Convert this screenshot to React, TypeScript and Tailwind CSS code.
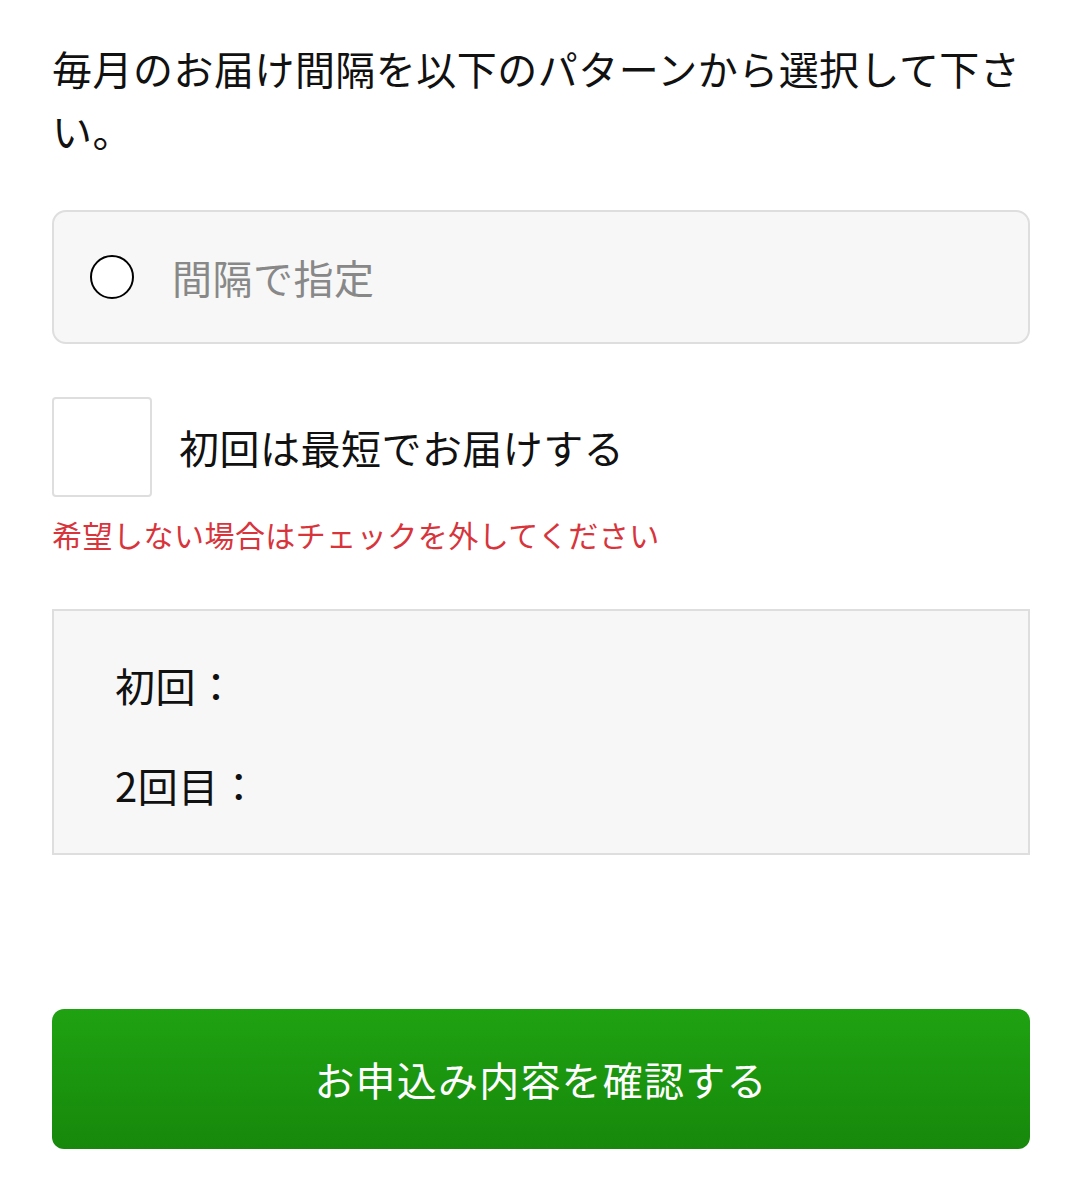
import { useState } from "react";

const App = () => {
  const [interval, setInterval] = useState(false);
  const [fastest, setFastest] = useState(false);

  return (
    <div
      className="min-h-[1194px] bg-white px-[52px] pt-[37px] tracking-[0.03em] text-[#111]"
      style={{ fontFamily: '"Noto Sans CJK JP", "Noto Sans", sans-serif' }}
    >
      <p className="text-[40px] leading-[62px]">
        毎月のお届け間隔を以下のパターンから選択して下さい。
      </p>

      <label
        className="mt-[49px] flex h-[134px] w-[978px] cursor-pointer items-center rounded-[14px] border-2 border-[#dedede] bg-[#f7f7f7] pl-[36px]"
        onClick={() => setInterval(!interval)}
      >
        <span className="flex h-[44px] w-[44px] items-center justify-center rounded-full border-2 border-black bg-white">
          {interval && <span className="h-[22px] w-[22px] rounded-full bg-black" />}
        </span>
        <span className="ml-[38px] text-[40px] leading-none text-[#888]">
          間隔で指定
        </span>
      </label>

      <label
        className="mt-[53px] flex cursor-pointer items-center"
        onClick={() => setFastest(!fastest)}
      >
        <span className="flex h-[100px] w-[100px] items-center justify-center rounded-[4px] border-2 border-[#dedede] bg-white">
          {fastest && (
            <svg width="56" height="56" viewBox="0 0 24 24" fill="none" stroke="#1b9a10" strokeWidth="3">
              <path d="M4 12l5 5L20 6" />
            </svg>
          )}
        </span>
        <span className="ml-[27px] text-[40px] leading-none">初回は最短でお届けする</span>
      </label>

      <p className="mt-[15px] text-[30px] leading-[45px] text-[#d8343c]">
        希望しない場合はチェックを外してください
      </p>

      <div className="mt-[52px] flex w-[978px] flex-col gap-[40px] border-2 border-[#dedede] bg-[#f7f7f7] pb-[38px] pl-[61px] pt-[44px] text-[40px] leading-[60px]">
        <div>初回：</div>
        <div>2回目：</div>
      </div>

      <button className="mt-[154px] flex h-[140px] w-[978px] items-center justify-center rounded-[12px] bg-gradient-to-b from-[#1fa212] to-[#17880b] text-[40px] tracking-[0.03em] text-white">
        お申込み内容を確認する
      </button>
    </div>
  );
};

export default App;
